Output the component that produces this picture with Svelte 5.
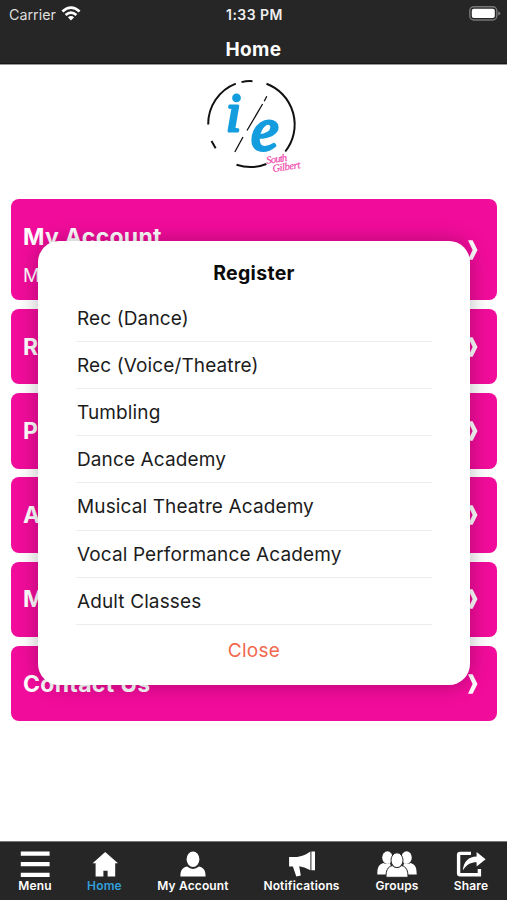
<script>
  const cards = [
    { title: "My Account", subtitle: "M" },
    { title: "R" },
    { title: "P" },
    { title: "A" },
    { title: "M" },
    { title: "Contact Us" },
  ];

  const classes = [
    "Rec (Dance)",
    "Rec (Voice/Theatre)",
    "Tumbling",
    "Dance Academy",
    "Musical Theatre Academy",
    "Vocal Performance Academy",
    "Adult Classes",
  ];

  const tabs = [
    { id: "menu", label: "Menu", width: 70 },
    { id: "home", label: "Home", width: 69 },
    { id: "account", label: "My Account", width: 108 },
    { id: "notifications", label: "Notifications", width: 109 },
    { id: "groups", label: "Groups", width: 82 },
    { id: "share", label: "Share", width: 66 },
  ];

  let activeTab = $state("home");
  let showRegister = $state(true);

  function openCard(card) {
    if (card.title === "R") showRegister = true;
  }
</script>

<div class="phone">
  <header>
    <div class="status-bar">
      <div class="carrier">
        <span>Carrier</span>
        <svg width="20" height="15" viewBox="0 0 20 15" fill="none" stroke="#fff" stroke-width="2.7">
          <path d="M1.4 5.6Q10 -2.2 18.6 5.6" />
          <path d="M4.6 9Q10 4.2 15.4 9" />
          <path d="M10 14.6L6.9 11.2Q10 8.7 13.1 11.2Z" fill="#fff" stroke="none" />
        </svg>
      </div>
      <span class="time">1:33 PM</span>
      <svg class="battery" width="32" height="15" viewBox="0 0 32 15">
        <rect x="0.8" y="0.8" width="27" height="13.2" rx="4" fill="none" stroke="#77777a" stroke-width="1.4" />
        <rect x="2.8" y="2.8" width="23" height="9.2" rx="2" fill="#fff" />
        <path d="M29.2 5.2Q31.4 6 31.4 7.4T29.2 9.6Z" fill="#77777a" />
      </svg>
    </div>
    <h1>Home</h1>
  </header>

  <main>
    <svg class="logo" width="110" height="100" viewBox="0 0 110 100">
      <g fill="none" stroke="#111" stroke-width="2">
        <path d="M8.2 49.6A43.3 43.3 0 0 1 35.8 8.6" />
        <path d="M41.5 7.1Q47 5.8 52.5 6.2" />
        <path d="M66.5 8.8A43.5 43.5 0 0 1 85.3 76.5" />
        <path d="M66.4 89A43.5 43.5 0 0 1 36.5 89.7" />
        <path d="M11.5 66L15.6 73.3" />
        <path d="M66.8 21.2L64.2 26.2M62.6 29L47 55.5M43 62L34.8 77" stroke-width="1.3" />
      </g>
      <text class="initial" x="26" y="56" font-size="54">i</text>
      <text class="initial" x="51" y="74.5" font-size="62">e</text>
      <g class="place" transform="rotate(-8 76 90)">
        <text x="67" y="87.5" textLength="21">South</text>
        <text x="72" y="96.5" textLength="28">Gilbert</text>
      </g>
    </svg>

    <div class="cards">
      {#each cards as card}
        <button class="card" class:tall={card.subtitle} onclick={() => openCard(card)}>
          <span class="card-text">
            <strong>{card.title}</strong>
            {#if card.subtitle}<small>{card.subtitle}</small>{/if}
          </span>
          <svg width="10" height="20" viewBox="0 0 10 20">
            <path d="M0 0.3H4.6L9.5 10L4.6 19.7H0L4.6 10Z" fill="#fff" />
          </svg>
        </button>
      {/each}
    </div>
  </main>

  {#if showRegister}
    <div class="modal">
      <h2>Register</h2>
      <ul>
        {#each classes as name}
          <li>{name}</li>
        {/each}
      </ul>
      <button class="close" onclick={() => (showRegister = false)}>Close</button>
    </div>
  {/if}

  <nav>
    {#each tabs as tab}
      <button
        class="tab"
        class:active={activeTab === tab.id}
        style="width: {tab.width}px"
        onclick={() => (activeTab = tab.id)}
      >
        <svg width="40" height="28" viewBox="0 0 40 28" fill="#fff">
          {#if tab.id === "menu"}
            <path d="M5.8 1.6h28.8v4.2H5.8zM5.8 12.1h28.8v4.2H5.8zM5.8 22.7h28.8v4.2H5.8z" />
          {:else if tab.id === "home"}
            <path d="M20.2 2L33 13.2H30.2V26.6H22.6V20.8H18.4V26.6H10.6V13.2H7.6Z" />
          {:else if tab.id === "account"}
            <ellipse cx="20" cy="9.3" rx="6.4" ry="7.7" />
            <path d="M7.4 26.6C7.4 20.5 9 18 14 16.6Q20 21.2 26 16.6C31 18 32.6 20.5 32.6 26.6Z" />
          {:else if tab.id === "notifications"}
            <path d="M7.1 7H15Q22 6.2 28.4 1.6V20.2Q22 16.9 17.2 16.3L18.8 25.5L14.3 26.6L10.9 16.6H7.1ZM29.4 1.6H33V20.3H29.4Z" />
          {:else if tab.id === "groups"}
            <ellipse cx="10.4" cy="7.6" rx="5.2" ry="6.3" />
            <ellipse cx="29.6" cy="7.6" rx="5.2" ry="6.3" />
            <path d="M0.3 24.6C0.3 17.3 1.5 14.7 6.3 13Q9.6 15.2 13 13L16 24.6ZM39.7 24.6C39.7 17.3 38.5 14.7 33.7 13Q30.4 15.2 27 13L24 24.6Z" />
            <g stroke="#262626" stroke-width="1">
              <path d="M9 27.3C9 20.5 10.4 17 15.2 15.6Q20 19 24.8 15.6C29.6 17 31 20.5 31 27.3Z" />
              <ellipse cx="20" cy="10.2" rx="6" ry="7.4" />
            </g>
          {:else}
            <path d="M20 3.4H9.2Q7.6 3.4 7.6 5V23.2Q7.6 24.8 9.2 24.8H28.4V19" fill="none" stroke="#fff" stroke-width="3.4" />
            <path d="M11.8 20.6C12.6 11.2 17.8 6.8 25.6 6.5V2L34.6 9.3L25.6 16.5V12.2C20 12.2 15.4 14.4 11.8 20.6Z" />
          {/if}
        </svg>
        <span>{tab.label}</span>
      </button>
    {/each}
  </nav>
</div>

<style>
  :global(body) {
    margin: 0;
    background: #fff;
  }

  * {
    box-sizing: border-box;
    margin: 0;
    padding: 0;
  }

  button {
    border: none;
    background: none;
    font-family: inherit;
    cursor: pointer;
  }

  .phone {
    position: relative;
    display: flex;
    flex-direction: column;
    width: 507px;
    height: 900px;
    overflow: hidden;
    background: #fff;
    font-family: Inter, sans-serif;
  }

  header {
    height: 65px;
    background: #262626;
    border-bottom: 1px solid #999;
    box-shadow: inset 0 -1px #161616;
    color: #fff;
  }

  .status-bar {
    display: grid;
    grid-template-columns: 1fr auto 1fr;
    align-items: center;
    height: 28px;
    padding: 0 6px 0 9px;
    font-size: 14.3px;
  }

  .carrier {
    display: flex;
    align-items: center;
    gap: 5px;
    color: #ddd;
  }

  .carrier svg {
    margin-top: -2px;
  }

  .time {
    margin-right: 1px;
    color: #eee;
    font-size: 14px;
    font-weight: 600;
    letter-spacing: 0.45px;
  }

  .battery {
    justify-self: end;
    margin-top: -2px;
  }

  h1 {
    font-size: 19px;
    line-height: 43px;
    font-weight: 700;
    letter-spacing: 0.4px;
    text-align: center;
  }

  main {
    flex: 1;
    display: flex;
    flex-direction: column;
  }

  .logo {
    margin: 10px 0 0 200px;
  }

  .initial {
    fill: #149dde;
    stroke: #149dde;
    stroke-width: 3;
    stroke-linejoin: round;
    font-family: "Liberation Serif", serif;
    font-style: italic;
  }

  .place {
    fill: #f14fae;
    stroke: #f14fae;
    stroke-width: 0.25;
    font-family: "Liberation Serif", serif;
    font-size: 10.5px;
    font-style: italic;
  }

  .cards {
    display: flex;
    flex-direction: column;
    gap: 8.8px;
    padding: 24px 10px 0 11px;
  }

  .card {
    display: flex;
    align-items: center;
    justify-content: space-between;
    height: 75.5px;
    padding: 0 19px 0 12px;
    border-radius: 8px;
    background: #f20c9b;
    color: #fff;
    text-align: left;
  }

  .card.tall {
    height: 101px;
  }

  .card-text {
    display: flex;
    flex-direction: column;
    gap: 13px;
  }

  .tall .card-text {
    padding-top: 10px;
  }

  .card strong {
    font-size: 23px;
    line-height: 28px;
    font-weight: 700;
    letter-spacing: 0.3px;
  }

  .card small {
    font-size: 19px;
    line-height: 23px;
  }

  .modal {
    position: absolute;
    top: 240.5px;
    left: 38px;
    width: 432px;
    height: 444px;
    padding: 13px 38px 0;
    border-radius: 21px;
    background: #fff;
    box-shadow: 0 0 22px rgba(0, 0, 0, 0.28);
    text-align: center;
  }

  h2 {
    font-size: 19.5px;
    line-height: 38px;
    font-weight: 700;
    letter-spacing: 0.3px;
    color: #0a0a0a;
  }

  ul {
    padding-top: 3.2px;
    list-style: none;
    text-align: left;
  }

  li {
    height: 47.2px;
    padding-left: 1px;
    border-bottom: 1px solid #ededed;
    color: #1c1c1c;
    font-size: 19px;
    line-height: 47px;
    letter-spacing: 0.12px;
  }

  .close {
    color: #f0694d;
    font-size: 19px;
    line-height: 52px;
    letter-spacing: 0.3px;
  }

  nav {
    display: flex;
    height: 59px;
    border-top: 1px solid #777;
    background: #262626;
  }

  .tab {
    display: flex;
    flex-direction: column;
    align-items: center;
    padding-top: 8px;
    color: #fff;
    font-size: 12px;
    line-height: 15px;
    font-weight: 600;
    letter-spacing: 0.15px;
    white-space: nowrap;
  }

  .tab.active {
    color: #329fdc;
  }
</style>
